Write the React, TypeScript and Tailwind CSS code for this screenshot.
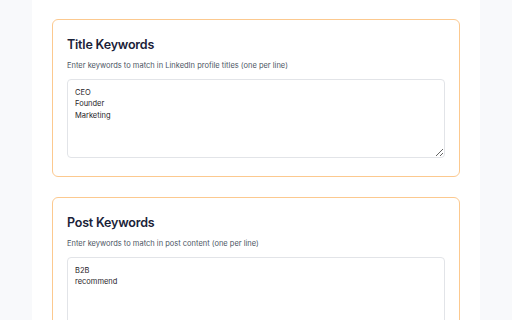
const sections = [
  {
    title: 'Title Keywords',
    hint: 'Enter keywords to match in LinkedIn profile titles (one per line)',
    value: 'CEO\nFounder\nMarketing',
  },
  {
    title: 'Post Keywords',
    hint: 'Enter keywords to match in post content (one per line)',
    value: 'B2B\nrecommend',
  },
];

export default function App() {
  return (
    <div className="h-[320px] overflow-hidden bg-[#f8f9fb] font-['Inter',sans-serif]">
      <div className="mx-8 flex h-full flex-col gap-5 bg-white px-5 pt-[19px]">
        {sections.map((s) => (
          <div key={s.title} className="shrink-0 rounded-[6px] border border-[#fcc98f] bg-white px-[14px] pt-[15px] pb-[18px]">
            <h2 className="text-[12.5px] leading-[20px] font-semibold tracking-[-0.2px] text-[#1a2238]">{s.title}</h2>
            <p className="mt-[5px] text-[7.5px] leading-[11px] text-[#4b5563]">{s.hint}</p>
            <textarea
              defaultValue={s.value}
              className="mt-[8px] block h-[79px] w-full resize-y rounded-[4px] border border-[#e2e4e8] bg-white px-[7px] py-[7px] text-[7.5px] leading-[11.3px] text-[#1f2328] outline-none"
            />
          </div>
        ))}
      </div>
    </div>
  );
}
